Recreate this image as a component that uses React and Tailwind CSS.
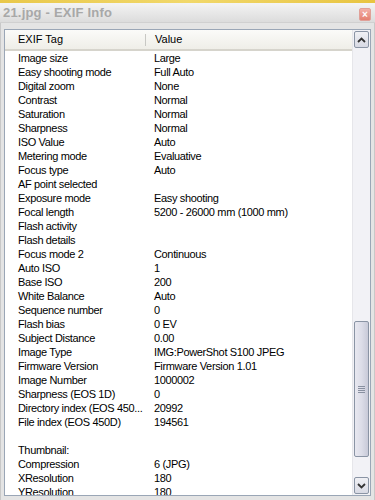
import React from "react";

const rows = [
  ["Image size", "Large"],
  ["Easy shooting mode", "Full Auto"],
  ["Digital zoom", "None"],
  ["Contrast", "Normal"],
  ["Saturation", "Normal"],
  ["Sharpness", "Normal"],
  ["ISO Value", "Auto"],
  ["Metering mode", "Evaluative"],
  ["Focus type", "Auto"],
  ["AF point selected", ""],
  ["Exposure mode", "Easy shooting"],
  ["Focal length", "5200 - 26000 mm (1000 mm)"],
  ["Flash activity", ""],
  ["Flash details", ""],
  ["Focus mode 2", "Continuous"],
  ["Auto ISO", "1"],
  ["Base ISO", "200"],
  ["White Balance", "Auto"],
  ["Sequence number", "0"],
  ["Flash bias", "0 EV"],
  ["Subject Distance", "0.00"],
  ["Image Type", "IMG:PowerShot S100 JPEG"],
  ["Firmware Version", "Firmware Version 1.01"],
  ["Image Number", "1000002"],
  ["Sharpness (EOS 1D)", "0"],
  ["Directory index (EOS 450...", "20992"],
  ["File index (EOS 450D)", "194561"],
  ["", ""],
  ["Thumbnail:", ""],
  ["Compression", "6 (JPG)"],
  ["XResolution", "180"],
  ["YResolution", "180"],
];

export default function App() {
  return (
    <div
      className="w-[375px] h-[500px] overflow-hidden bg-[#e4e4e4] flex flex-col"
      style={{ fontFamily: '"Liberation Sans", Arial, sans-serif' }}
    >
      <div className="h-[3px] shrink-0 bg-gradient-to-r from-[#e9c84a] via-[#f1d86a] to-[#e8c440]" />
      <div className="h-[20px] shrink-0 flex items-center justify-between pl-[3px] pr-[4px] bg-gradient-to-b from-[#f4f4f4] to-[#dcdcdc] border-b border-[#d0d0d0]">
        <span className="text-[13px] font-bold text-[#a8a8a8] tracking-[0.2px]">21.jpg - EXIF Info</span>
        <div className="w-[12px] h-[13px] mt-[4px] rounded-[2px] bg-gradient-to-b from-[#f3b0a8] to-[#e48070] border border-[#e0a098] flex items-center justify-center text-white text-[10px] leading-none font-bold">
          ×
        </div>
      </div>
      <div className="flex-1 min-h-0 flex px-[3px] pt-[6px] pb-[4px] border-l border-r border-[#c8c8c8]">
        <div className="flex-1 min-h-0 flex border border-[#9aa6b6] bg-white">
          <div className="flex-1 min-h-0 flex flex-col overflow-hidden">
            <div className="h-[21px] shrink-0 flex items-center bg-gradient-to-b from-[#fbfbf9] to-[#efeee8] border-b-[2px] border-[#d6d4cc] text-[11px] text-black">
              <div className="w-[141px] pl-[13px] border-r border-[#c8c8c4] h-[12px] flex items-center">EXIF Tag</div>
              <div className="pl-[9px]">Value</div>
            </div>
            <div className="shrink-0 text-[11px] text-black tracking-[-0.35px]">
              {rows.map(([k, v], i) => (
                <div key={i} className="h-[14px] flex items-center leading-none">
                  <div className="w-[149px] pl-[13px] whitespace-nowrap overflow-hidden">{k}</div>
                  <div className="whitespace-nowrap">{v}</div>
                </div>
              ))}
            </div>
          </div>
          <div className="w-[18px] shrink-0 flex flex-col bg-[#f2f2f6] border-l border-[#e6e6ea]">
            <div className="shrink-0 mx-[1px] mt-[1px] h-[17px] rounded-[2px] border border-[#8a94a4] bg-gradient-to-b from-[#f0f0f4] to-[#d8dae4] flex items-center justify-center">
              <svg width="9" height="6" viewBox="0 0 9 6">
                <path d="M1 5 L4.5 1.5 L8 5" fill="none" stroke="#333" strokeWidth="1.8" />
              </svg>
            </div>
            <div className="h-[273px] shrink-0" />
            <div className="shrink-0 mx-[1px] h-[136px] rounded-[2px] border border-[#8a94a4] bg-gradient-to-r from-[#e8e8f0] via-[#dcdde8] to-[#c8cad8] flex items-center justify-center">
              <div className="flex flex-col gap-[1px]">
                <div className="w-[7px] h-[1px] bg-[#8890a0]" />
                <div className="w-[7px] h-[1px] bg-[#8890a0]" />
                <div className="w-[7px] h-[1px] bg-[#8890a0]" />
                <div className="w-[7px] h-[1px] bg-[#8890a0]" />
              </div>
            </div>
            <div className="flex-1" />
            <div className="shrink-0 mx-[1px] mb-[1px] h-[17px] rounded-[2px] border border-[#8a94a4] bg-gradient-to-b from-[#f0f0f4] to-[#d8dae4] flex items-center justify-center">
              <svg width="9" height="6" viewBox="0 0 9 6">
                <path d="M1 1 L4.5 4.5 L8 1" fill="none" stroke="#333" strokeWidth="1.8" />
              </svg>
            </div>
          </div>
        </div>
      </div>
    </div>
  );
}
